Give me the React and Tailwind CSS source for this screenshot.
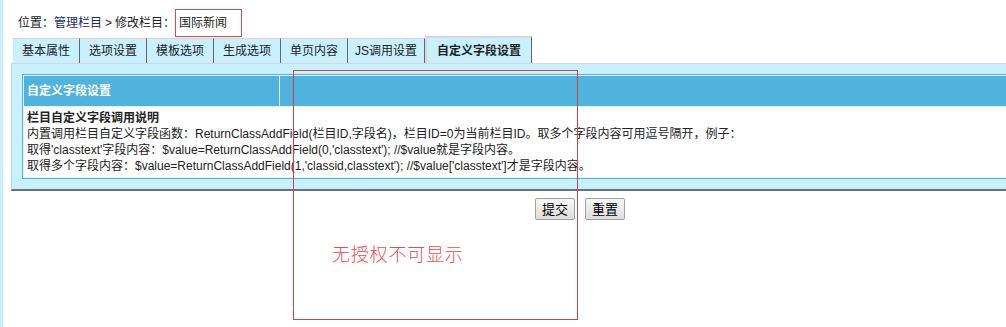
import React from 'react';

const tabs = ['基本属性', '选项设置', '模板选项', '生成选项', '单页内容'];

export default function App() {
    return (
        <div className="relative flex min-h-[327px] bg-white text-[12px] text-[#222] font-['Liberation_Sans','Noto_Sans_CJK_SC',sans-serif]">
            <div className="w-[3px] shrink-0 bg-[#c8f0ff]" />

            <div className="flex-1 min-w-0">
                <div className="flex items-center pt-[9px] pl-[15px] h-[37px]">
                    <span>位置：</span>
                    <span className="text-[#1b2a6b]">管理栏目</span>
                    <span className="mx-[3px]">&gt;</span>
                    <span>修改栏目：</span>
                    <span className="h-[28px] w-[67px] border border-[#e04848] flex items-center pl-[3px] box-border">国际新闻</span>
                </div>

                <div className="flex items-end ml-[10px] h-[26px]">
                    {tabs.map((t) => (
                        <div key={t} className="h-[25px] px-[9px] flex items-center bg-[#c8f0ff] border-t border-t-[#cfd6da] border-r border-r-[#666]">
                            {t}
                        </div>
                    ))}
                    <div className="h-[25px] px-[7px] flex items-center bg-[#c8f0ff] border-t border-t-[#cfd6da] border-r border-r-[#666]">
                        JS调用设置
                    </div>
                    <div className="h-[27px] px-[10px] flex items-center bg-[#c8f0ff] border-t-2 border-l-2 border-t-[#d4d8da] border-l-[#d4d8da] border-r border-r-[#5c666b] font-bold">
                        自定义字段设置
                    </div>
                </div>

                <div className="ml-[8px] bg-[#c8f0ff] border-t border-t-[#d6d9db] border-l border-l-[#c0d2da] border-b-2 border-b-[#65737a] pl-[10px] pt-[10px] pb-[10px]">
                    <div className="border border-r-0 border-[#4fb3dd] bg-[#dff4fc] p-[1px] pr-0 flex flex-col gap-[1px]">
                        <div className="grid grid-cols-[255px_1fr] gap-[1px] h-[30px]">
                            <div className="bg-[#4fb3dd] text-white font-bold flex items-center pl-[3px]">自定义字段设置</div>
                            <div className="bg-[#4fb3dd]" />
                        </div>
                        <div className="bg-white pl-[3px] pt-[3px] h-[70px] leading-[16px] whitespace-nowrap">
                            <div className="font-bold">栏目自定义字段调用说明</div>
                            <div>内置调用栏目自定义字段函数：ReturnClassAddField(栏目ID,字段名)，栏目ID=0为当前栏目ID。取多个字段内容可用逗号隔开，例子：</div>
                            <div>取得'classtext'字段内容：$value=ReturnClassAddField(0,'classtext'); //$value就是字段内容。</div>
                            <div>取得多个字段内容：$value=ReturnClassAddField(1,'classid,classtext'); //$value['classtext']才是字段内容。</div>
                        </div>
                    </div>
                </div>

                <div className="flex gap-[10px] pl-[532px] mt-[7px]">
                    <button className="h-[22px] w-[40px] border border-[#a0a0a0] rounded-[2px] bg-gradient-to-b from-[#f6f6f6] to-[#dedede] text-[13px] text-black leading-none">提交</button>
                    <button className="h-[22px] w-[40px] border border-[#a0a0a0] rounded-[2px] bg-gradient-to-b from-[#f6f6f6] to-[#dedede] text-[13px] text-black leading-none">重置</button>
                </div>
            </div>

            <div className="absolute left-[293px] top-[70px] w-[285px] h-[250px] border border-[#e03c3c] pl-[38px] pt-[172px] pointer-events-none">
                <span className="text-[18px] leading-[24px] text-[#ef4a4a] font-light tracking-[0.8px]">无授权不可显示</span>
            </div>
        </div>
    );
}
